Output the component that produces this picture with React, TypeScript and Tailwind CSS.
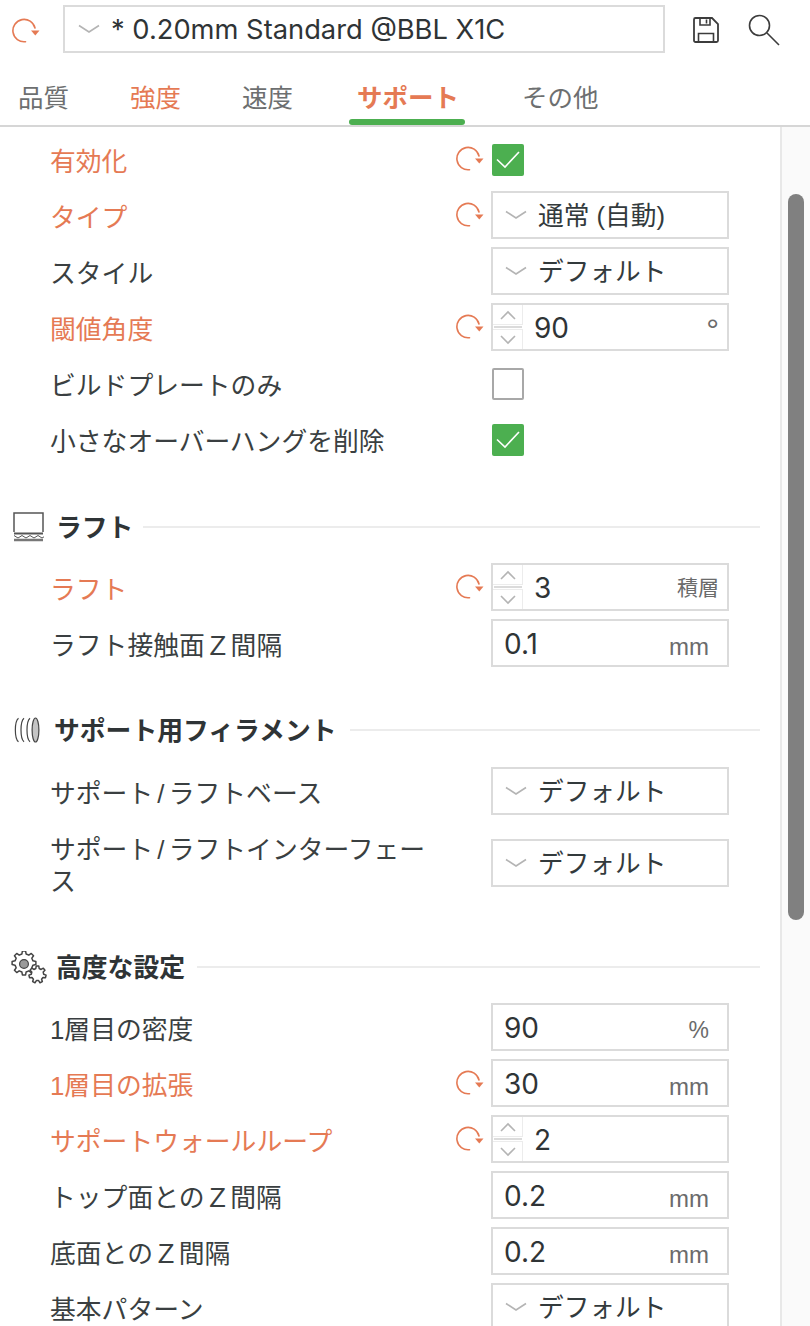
function gearPath(cx: number, cy: number, rOuter: number, rInner: number, teeth: number) {
  const pts: string[] = [];
  const step = (Math.PI * 2) / teeth;
  for (let i = 0; i < teeth; i++) {
    const a = i * step - Math.PI / 2;
    const seq: [number, number][] = [
      [rInner, a - step * 0.3],
      [rOuter, a - step * 0.17],
      [rOuter, a + step * 0.17],
      [rInner, a + step * 0.3],
    ];
    for (const [r, t] of seq) {
      pts.push((cx + r * Math.cos(t)).toFixed(2) + " " + (cy + r * Math.sin(t)).toFixed(2));
    }
  }
  return "M" + pts.join("L") + "Z";
}

function Reset() {
  return (
    <svg width="28" height="26" viewBox="0 0 28 26" fill="none" className="block">
      <path d="M23 10.5A11.2 11.2 0 1 0 13.5 24.2" stroke="#e57a54" strokeWidth="1.6" strokeLinecap="round" transform="translate(0 -0.5)" />
      <path d="M19 12.5h8.5l-4.2 5z" fill="#e57a54" />
    </svg>
  );
}

function Chevron() {
  return (
    <svg width="22" height="10" viewBox="0 0 22 10" fill="none" className="block shrink-0">
      <path d="M1 1.5 11 8 21 1.5" stroke="#b4b4b4" strokeWidth="1.6" />
    </svg>
  );
}

function Check() {
  return (
    <div className="w-8 h-8 rounded-[2px] bg-[#4caf50] flex items-center justify-center mt-[1px] ml-[1px]">
      <svg width="26" height="20" viewBox="0 0 26 20" fill="none">
        <path d="M2 9.5 10 17 24 2" stroke="#fff" strokeWidth="1.6" />
      </svg>
    </div>
  );
}

function Empty() {
  return <div className="w-8 h-8 rounded-[2px] border-2 border-[#a8a8a8] bg-white mt-[1px] ml-[1px]" />;
}

function Select({ text }: { text: string }) {
  return (
    <div className="w-[238px] h-12 border-2 border-[#dbdbdb] flex items-center pl-[12px] gap-[11px] text-[25.7px] text-[#333a3c]">
      <Chevron />
      <span className="mt-[3px]">{text}</span>
    </div>
  );
}

function Spin() {
  return (
    <div className="w-[30px] h-[44px] shrink-0 flex flex-col justify-between">
      <div className="h-[20px] border-r border-b border-[#ececec] flex items-center justify-center">
        <svg width="18" height="10" viewBox="0 0 18 10" fill="none"><path d="M2 9 9 2l7 7" stroke="#b4b4b4" strokeWidth="1.6" /></svg>
      </div>
      <div className="h-[2px] bg-[#dbdbdb] mx-[1px]" />
      <div className="h-[20px] border-r border-t border-[#ececec] flex items-center justify-center">
        <svg width="18" height="10" viewBox="0 0 18 10" fill="none"><path d="M2 1l7 7 7-7" stroke="#b4b4b4" strokeWidth="1.6" /></svg>
      </div>
    </div>
  );
}

function Field({ value, unit, spin, unitClass }: { value: string; unit?: string; spin?: boolean; unitClass?: string }) {
  return (
    <div className="w-[238px] h-12 border-2 border-[#dbdbdb] flex items-center text-[28px] text-[#2f3436]">
      {spin ? <Spin /> : null}
      <span className="ml-[11px] mt-[2px]" style={{ fontFamily: '"Inter", sans-serif' }}>{value}</span>
      {unit ? (
        <span className={"ml-auto text-[#6b6b6b] " + (unitClass ?? "mr-[18px] mt-[7px] text-[24px]")}>{unit}</span>
      ) : null}
    </div>
  );
}

function Row({ label, changed, tall, children }: { label: string; changed?: boolean; tall?: boolean; children: React.ReactNode }) {
  return (
    <div className={tall ? "h-20 flex items-center" : "h-12 flex items-center"}>
      <div className={"w-[401px] ml-[50px] pr-[20px] text-[25.8px] leading-[32px] mt-[6px] [word-spacing:-3px] " + (changed ? "text-[#e57a54]" : "text-[#3a3f41]")}>
        {label}
      </div>
      <div className="w-[40px] flex justify-start pl-[5px]">{changed ? <Reset /> : null}</div>
      {children}
    </div>
  );
}

function Header({ icon, title, iconClass, lineClass, className }: { icon: React.ReactNode; title: string; iconClass: string; lineClass: string; className: string }) {
  return (
    <div className={"h-10 flex items-center " + className}>
      <div className={"shrink-0 flex items-center " + iconClass}>{icon}</div>
      <div className="text-[25.8px] font-bold text-[#2f3436] whitespace-nowrap mt-[3px]">{title}</div>
      <div className={"flex-1 h-[2px] bg-[#ececec] mr-[20px] " + lineClass} />
    </div>
  );
}

export default function App() {
  return (
    <div
      className="w-[810px] h-[1326px] overflow-hidden bg-white flex flex-col"
      style={{ fontFamily: '"Liberation Sans", "Noto Sans CJK JP", sans-serif' }}
    >
      <div className="h-[58px] flex items-start pt-[5px] shrink-0">
        <div className="w-[63px] pl-[12px] pt-[13px]">
          <Reset />
        </div>
        <div className="w-[602px] h-12 border-2 border-[#dbdbdb] flex items-center pl-[13px] gap-[11px]">
          <Chevron />
          <span className="text-[27.3px] text-[#2f3436] mt-[3px]" style={{ fontFamily: '"Inter", sans-serif' }}>* 0.20mm Standard @BBL X1C</span>
        </div>
        <svg width="28" height="28" viewBox="0 0 28 28" fill="none" className="ml-[27px] mt-[11px]">
          <path d="M2 3.5a1.5 1.5 0 0 1 1.5-1.5H20l6 6v16.5a1.5 1.5 0 0 1-1.5 1.5h-21A1.5 1.5 0 0 1 2 24.5z" stroke="#3c3c3c" strokeWidth="1.8" />
          <path d="M8 2v7h10V2M14.5 3.5v4M6.5 26v-8.5h15V26" stroke="#3c3c3c" strokeWidth="1.6" />
        </svg>
        <svg width="32" height="32" viewBox="0 0 32 32" fill="none" className="ml-[28px] mt-[9px]">
          <circle cx="11.5" cy="11.5" r="10" stroke="#3c3c3c" strokeWidth="1.6" />
          <path d="M19 19 31 31" stroke="#3c3c3c" strokeWidth="1.6" />
        </svg>
      </div>

      <div className="h-[69px] shrink-0 border-b-2 border-[#d6d6d6] flex items-start pt-[21px] text-[25.5px] text-[#6d6f70]">
        <span className="ml-[18px]">品質</span>
        <span className="ml-[61px] text-[#e57a54]">強度</span>
        <span className="ml-[61px]">速度</span>
        <span className="ml-[64px] font-bold text-[#e57a54] relative">
          サポート
          <span className="absolute left-[-8px] right-[-6px] top-[40px] h-[6px] bg-[#4caf50] rounded-[3px]" />
        </span>
        <span className="ml-[63px]">その他</span>
      </div>

      <div className="flex-1 flex min-h-0">
        <div className="w-[780px] shrink-0 pt-[8px]">
          <div className="flex flex-col gap-2">
            <Row label="有効化" changed><Check /></Row>
            <Row label="タイプ" changed><Select text="通常 (自動)" /></Row>
            <Row label="スタイル"><Select text="デフォルト" /></Row>
            <Row label="閾値角度" changed><Field value="90" unit="°" spin unitClass="mr-[8px] mt-[6px] text-[32px] leading-none" /></Row>
            <Row label="ビルドプレートのみ"><Empty /></Row>
            <Row label="小さなオーバーハングを削除"><Check /></Row>
          </div>

          <Header
            className="mt-[44px]"
            title="ラフト"
            iconClass="w-[56px] pl-[13px]"
            lineClass="ml-[10px]"
            icon={
              <svg width="31" height="30" viewBox="0 0 31 30" fill="none">
                <path d="M1 20V1h29v19" stroke="#555" strokeWidth="1.5" />
                <path d="M1 21.5h29" stroke="#555" strokeWidth="2" />
                <path d="M1 23.5l4 2.5 4-2.5 4 2.5 4-2.5 4 2.5 4-2.5 4 2.5 2-1.2" stroke="#555" strokeWidth="1" />
                <path d="M1 28h29" stroke="#777" strokeWidth="2.5" />
              </svg>
            }
          />
          <div className="mt-4 flex flex-col gap-2">
            <Row label="ラフト" changed><Field value="3" unit="積層" spin unitClass="mr-[8px] mt-[2px] text-[21px]" /></Row>
            <Row label="ラフト接触面Ｚ間隔"><Field value="0.1" unit="mm" /></Row>
          </div>

          <Header
            className="mt-[43px]"
            title="サポート用フィラメント"
            iconClass="w-[54px] pl-[14px]"
            lineClass="ml-[14px]"
            icon={
              <svg width="26" height="26" viewBox="0 0 26 26" fill="none">
                <ellipse cx="21.5" cy="13" rx="3.4" ry="12" fill="#c4c4c4" stroke="#444" strokeWidth="1.2" />
                <path d="M16 1.2C12 4.5 12 21.5 16 24.8M10 1.2C6 4.5 6 21.5 10 24.8M4.5 1.2C.3 4.5.3 21.5 4.5 24.8" stroke="#444" strokeWidth="1.2" />
              </svg>
            }
          />
          <div className="mt-[17px] flex flex-col gap-2">
            <Row label="サポート / ラフトベース"><Select text="デフォルト" /></Row>
            <Row label="サポート / ラフトインターフェース" tall><Select text="デフォルト" /></Row>
          </div>

          <Header
            className="mt-[44px]"
            title="高度な設定"
            iconClass="w-[56px] pl-[10px]"
            lineClass="ml-[12px]"
            icon={
              <svg width="37" height="33" viewBox="0 0 37 33" fill="none">
                <path d={gearPath(14, 12, 12, 9.2, 8)} stroke="#444" strokeWidth="1.5" strokeLinejoin="round" fill="#fff" />
                <circle cx="14" cy="13" r="4.4" fill="#9a9a9a" stroke="#444" strokeWidth="1.2" />
                <path d={gearPath(27.5, 23.5, 8.6, 6.2, 7)} stroke="#444" strokeWidth="1.5" strokeLinejoin="round" fill="#fff" />
              </svg>
            }
          />
          <div className="mt-4 flex flex-col gap-2">
            <Row label="1層目の密度"><Field value="90" unit="%" unitClass="mr-[18px] mt-[7px] text-[23px]" /></Row>
            <Row label="1層目の拡張" changed><Field value="30" unit="mm" /></Row>
            <Row label="サポートウォールループ" changed><Field value="2" spin /></Row>
            <Row label="トップ面とのＺ間隔"><Field value="0.2" unit="mm" /></Row>
            <Row label="底面とのＺ間隔"><Field value="0.2" unit="mm" /></Row>
            <Row label="基本パターン"><Select text="デフォルト" /></Row>
          </div>
        </div>

        <div className="w-[30px] shrink-0 border-l-2 border-[#e8e8e8] bg-[#fafafa] pl-[6px] pt-[67px]">
          <div className="w-4 h-[726px] rounded-lg bg-[#808080]" />
        </div>
      </div>
    </div>
  );
}
